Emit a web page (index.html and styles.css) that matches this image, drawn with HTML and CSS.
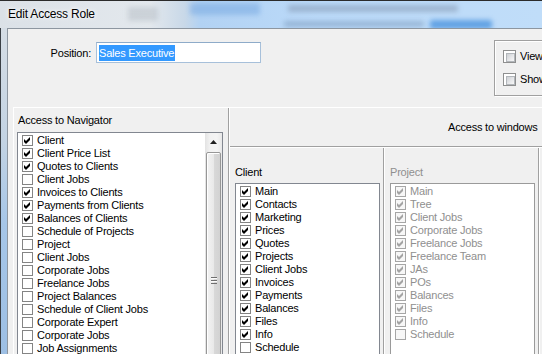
FILE: index.html
```html
<!DOCTYPE html>
<html>
<head>
<meta charset="utf-8">
<title>Edit Access Role</title>
<link rel="stylesheet" href="styles.css">
</head>
<body>
<div class="window">
  <div class="titlebar">
    <div class="blob blob-a"></div>
    <div class="blob blob-b"></div>
    <div class="blob blob-c"></div>
    <div class="blob blob-d"></div>
    <div class="blob blob-e"></div>
    <div class="title">Edit Access Role</div>
  </div>
  <div class="frame">
    <div class="client">
      <div class="top">
        <div class="pos-row">
          <label class="pos-label">Position:</label>
          <div class="input"><span class="sel">Sales Executive</span></div>
        </div>
        <div class="opts">
          <div class="opt"><span class="wcb"></span><span>View</span></div>
          <div class="opt"><span class="wcb"></span><span>Show</span></div>
        </div>
      </div>
      <div class="lower">
        <div class="nav">
          <div class="nav-title">Access to Navigator</div>
          <div class="navlist">
            <div class="items">
              <div class="row"><span class="cb on"></span>Client</div>
              <div class="row"><span class="cb on"></span>Client Price List</div>
              <div class="row"><span class="cb on"></span>Quotes to Clients</div>
              <div class="row"><span class="cb"></span>Client Jobs</div>
              <div class="row"><span class="cb on"></span>Invoices to Clients</div>
              <div class="row"><span class="cb on"></span>Payments from Clients</div>
              <div class="row"><span class="cb on"></span>Balances of Clients</div>
              <div class="row"><span class="cb"></span>Schedule of Projects</div>
              <div class="row"><span class="cb"></span>Project</div>
              <div class="row"><span class="cb"></span>Client Jobs</div>
              <div class="row"><span class="cb"></span>Corporate Jobs</div>
              <div class="row"><span class="cb"></span>Freelance Jobs</div>
              <div class="row"><span class="cb"></span>Project Balances</div>
              <div class="row"><span class="cb"></span>Schedule of Client Jobs</div>
              <div class="row"><span class="cb"></span>Corporate Expert</div>
              <div class="row"><span class="cb"></span>Corporate Jobs</div>
              <div class="row"><span class="cb"></span>Job Assignments</div>
            </div>
            <div class="scroll">
              <div class="sb-up">
                <svg width="7" height="4" viewBox="0 0 7 4"><path d="M3.5 0 L7 4 L0 4 Z" fill="#202020"/></svg>
              </div>
              <div class="sb-thumb">
                <svg width="6" height="7" viewBox="0 0 6 7" shape-rendering="crispEdges">
                  <rect x="0" y="0" width="6" height="1" fill="#6f6f6f"/>
                  <rect x="0" y="1" width="6" height="1" fill="#fbfbfb"/>
                  <rect x="0" y="3" width="6" height="1" fill="#6f6f6f"/>
                  <rect x="0" y="4" width="6" height="1" fill="#fbfbfb"/>
                  <rect x="0" y="6" width="6" height="1" fill="#6f6f6f"/>
                </svg>
              </div>
            </div>
          </div>
        </div>
        <div class="win">
          <div class="win-head">Access to windows</div>
          <div class="cols">
            <div class="col">
              <div class="col-title">Client</div>
              <div class="wlist">
                <div class="row"><span class="cb on"></span>Main</div>
                <div class="row"><span class="cb on"></span>Contacts</div>
                <div class="row"><span class="cb on"></span>Marketing</div>
                <div class="row"><span class="cb on"></span>Prices</div>
                <div class="row"><span class="cb on"></span>Quotes</div>
                <div class="row"><span class="cb on"></span>Projects</div>
                <div class="row"><span class="cb on"></span>Client Jobs</div>
                <div class="row"><span class="cb on"></span>Invoices</div>
                <div class="row"><span class="cb on"></span>Payments</div>
                <div class="row"><span class="cb on"></span>Balances</div>
                <div class="row"><span class="cb on"></span>Files</div>
                <div class="row"><span class="cb on"></span>Info</div>
                <div class="row"><span class="cb"></span>Schedule</div>
              </div>
            </div>
            <div class="col col-2 dis">
              <div class="col-title">Project</div>
              <div class="wlist">
                <div class="row"><span class="cb on"></span>Main</div>
                <div class="row"><span class="cb on"></span>Tree</div>
                <div class="row"><span class="cb on"></span>Client Jobs</div>
                <div class="row"><span class="cb on"></span>Corporate Jobs</div>
                <div class="row"><span class="cb on"></span>Freelance Jobs</div>
                <div class="row"><span class="cb on"></span>Freelance Team</div>
                <div class="row"><span class="cb on"></span>JAs</div>
                <div class="row"><span class="cb on"></span>POs</div>
                <div class="row"><span class="cb on"></span>Balances</div>
                <div class="row"><span class="cb on"></span>Files</div>
                <div class="row"><span class="cb on"></span>Info</div>
                <div class="row"><span class="cb"></span>Schedule</div>
              </div>
            </div>
            <div class="col col-3"></div>
          </div>
        </div>
      </div>
    </div>
  </div>
</div>
</body>
</html>
```
FILE: styles.css
```css
* { box-sizing: border-box; }
html, body { margin: 0; padding: 0; }
body {
  width: 542px;
  height: 354px;
  overflow: hidden;
  font-family: "Liberation Sans", Arial, sans-serif;
  font-size: 11px;
  letter-spacing: -0.2px;
  color: #000;
  background: #c9d6e3;
}
.window {
  width: 542px;
  height: 354px;
  display: flex;
  flex-direction: column;
}
.titlebar {
  height: 28px;
  flex: none;
  position: relative;
  overflow: hidden;
  border-top: 1px solid #2b2b2b;
  background: linear-gradient(to right, #dbe1e7 0, #e3e8ed 150px, #c8d8e8 185px, #b2d2f3 200px, #bbdaf9 320px, #c0ddf9 100%);
}
.blob {
  position: absolute;
  filter: blur(2.5px);
  border-radius: 2px;
}
.blob-a { left: 288px; top: 4px; width: 170px; height: 7px; background: rgba(110, 125, 150, 0.4); }
.blob-b { left: 430px; top: 19px; width: 62px; height: 9px; background: #62a2e4; }
.blob-c { left: 284px; top: 20px; width: 140px; height: 6px; background: rgba(70, 100, 140, 0.3); }
.blob-d { left: 190px; top: 2px; width: 70px; height: 12px; background: rgba(120, 170, 225, 0.55); }
.blob-e { left: 128px; top: 6px; width: 30px; height: 14px; background: rgba(150, 160, 170, 0.3); }
.title {
  position: relative;
  padding-left: 8px;
  line-height: 26px;
  font-size: 12px;
  letter-spacing: -0.2px;
  color: #000;
  text-shadow: 0 0 6px #fff, 0 0 3px #fff;
}
.frame {
  flex: 1;
  display: flex;
  min-height: 0;
  padding-left: 6px;
  border-left: 1px solid #3a3f45;
  background: linear-gradient(to bottom, #d5dde5 0, #c3d3e3 35%, #a6c6e8 60%, #9dbfe4 100%);
}
.client {
  flex: 1;
  min-width: 0;
  background: #f0f0f0;
  border-left: 1px solid #8d96a0;
  border-top: 1px solid #8d96a0;
  display: flex;
  flex-direction: column;
}
.top {
  height: 78px;
  flex: none;
  display: flex;
  align-items: flex-start;
  padding-top: 11px;
  white-space: nowrap;
}
.pos-row {
  display: flex;
  align-items: center;
  margin-top: 2px;
}
.pos-label {
  width: 83px;
  text-align: right;
  margin-right: 5px;
}
.input {
  width: 165px;
  height: 21px;
  background: #fff;
  border: 1px solid #a7c0da;
  border-top-color: #8eabc9;
  padding-left: 2px;
  display: flex;
  align-items: center;
}
.sel {
  background: #3399ff;
  color: #fff;
  line-height: 16px;
  padding: 0 1px 0 0;
}
.opts {
  margin-left: 233px;
  width: 80px;
  height: 56px;
  flex: none;
  border: 1px solid #a0a0a0;
  box-shadow: inset 1px 1px 0 #fff, 1px 1px 0 #fff;
  padding: 8px 0 0 8px;
  display: flex;
  flex-direction: column;
  gap: 9px;
}
.opt {
  height: 14px;
  display: flex;
  align-items: center;
  gap: 4px;
}
.wcb {
  width: 13px;
  height: 13px;
  flex: none;
  border: 1px solid #8e8f8f;
  background: #fff;
  padding: 2px;
}
.wcb::after {
  content: "";
  display: block;
  width: 100%;
  height: 100%;
  border: 1px solid #b2b6ba;
  background: linear-gradient(135deg, #cdd0d4 0, #e8e9eb 60%, #f6f6f6 100%);
}
.lower {
  flex: 1;
  min-height: 0;
  display: flex;
  margin-left: 5px;
  border-top: 1px solid #fff;
  border-left: 1px solid #fff;
}
.nav {
  width: 215px;
  flex: none;
  border-right: 1px solid #a0a0a0;
  padding: 6px 0 0 3px;
  display: flex;
  flex-direction: column;
}
.nav-title {
  line-height: 13px;
  padding-left: 1px;
}
.navlist {
  margin-top: 5px;
  width: 206px;
  height: 240px;
  flex: none;
  border: 1px solid #828790;
  background: #fff;
  display: flex;
  overflow: hidden;
}
.items {
  flex: 1;
  padding-top: 1px;
  min-width: 0;
}
.row {
  height: 13px;
  display: flex;
  align-items: center;
  padding-left: 4px;
  white-space: nowrap;
  line-height: 13px;
}
.cb {
  width: 11px;
  height: 11px;
  flex: none;
  border: 1px solid #848484;
  background: #fff;
  margin-right: 4px;
  position: relative;
}
.cb.on::after {
  content: "";
  position: absolute;
  left: 0;
  top: 0;
  width: 9px;
  height: 9px;
  background: #000;
  clip-path: polygon(1px 3px, 3px 5px, 7px 1px, 7px 4px, 3px 8px, 1px 6px);
}
.scroll {
  width: 17px;
  flex: none;
  display: flex;
  flex-direction: column;
  background: linear-gradient(to right, #e3e3e3, #f2f2f2 30%, #f4f4f4 70%, #e8e8e8);
}
.sb-up {
  height: 17px;
  flex: none;
  display: flex;
  align-items: center;
  justify-content: center;
}
.sb-thumb {
  margin: 2px 1px 0 1px;
  height: 256px;
  flex: none;
  border: 1px solid #979797;
  border-radius: 2px;
  background: linear-gradient(to right, #f3f3f3 0, #e9e9e9 50%, #d9d9d9 51%, #d2d2d2 100%);
  box-shadow: inset 1px 1px 0 #fff;
  display: flex;
  align-items: center;
  justify-content: center;
}
.win {
  flex: 1;
  min-width: 0;
  border-left: 1px solid #fff;
  display: flex;
  flex-direction: column;
}
.win-head {
  height: 39px;
  flex: none;
  border-bottom: 1px solid #a0a0a0;
  display: flex;
  align-items: center;
  padding-left: 218px;
  white-space: nowrap;
  overflow: hidden;
}
.cols {
  flex: 1;
  display: flex;
  border-top: 1px solid #fff;
}
.col {
  width: 154px;
  flex: none;
  border-right: 1px solid #a0a0a0;
  padding: 18px 0 0 5px;
}
.col-2 {
  width: 155px;
  border-left: 1px solid #fff;
}
.col-3 {
  flex: 1;
  border-left: 1px solid #fff;
  border-right: none;
}
.col-title {
  line-height: 13px;
}
.wlist {
  margin-top: 4px;
  width: 145px;
  height: 200px;
  border: 1px solid #828790;
  background: #fff;
  padding-top: 1px;
}
.dis .col-title,
.dis .row {
  color: #8f8f8f;
}
.dis .wlist {
  border-color: #9a9a9a;
}
.dis .cb {
  border-color: #a6a6a6;
  background: #f7f7f7;
}
.dis .cb.on::after {
  background: #a3a3a3;
}
```
